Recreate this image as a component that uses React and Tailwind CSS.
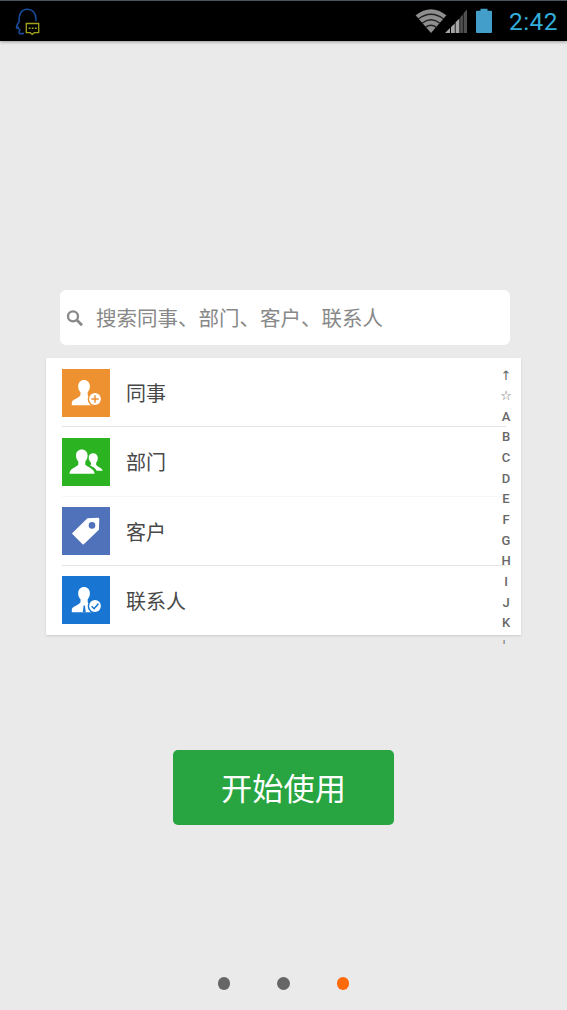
import React from 'react';

const LETTERS = ['↑', '☆', 'A', 'B', 'C', 'D', 'E', 'F', 'G', 'H', 'I', 'J', 'K', 'ı'];

const person = 'M22 11C25.3 11 27.9 13.5 27.9 17.2C27.9 20 26.9 21.8 25.7 23.2V26.3C27 28.3 34 28.8 34.6 33.5V36.2H9.8V33.5C10.5 30 17 29.2 18.5 26.3V23.2C17 21.7 16.2 20 16.2 17.2C16.2 13.5 18.7 11 22 11Z';

function ColleagueIcon() {
  return (
    <svg viewBox="0 0 48 48" className="size-12 bg-[#ee9131]">
      <path d={person} fill="#fff" />
      <circle cx="33" cy="30" r="7.3" fill="#ee9131" />
      <circle cx="33" cy="30" r="5.9" fill="#fff" />
      <path d="M33 26.3v7.4M29.3 30h7.4" stroke="#ee9131" strokeWidth="1.5" />
    </svg>
  );
}

function DepartmentIcon() {
  return (
    <svg viewBox="0 0 48 48" className="size-12 bg-[#2bb321]">
      <path d="M31 15.2C33.8 15.2 35.8 17.2 35.8 20C35.8 22 35.2 23.5 34.2 24.5V26.8C35.3 29.4 39.8 29.2 40.7 32.8H34.7C33.5 29.8 30.6 28.8 28.2 27.4C29.3 26.4 29.3 25.2 28.8 24.4C27.4 23 26.7 21.7 26.7 19.6C26.7 17 28.5 15.2 31 15.2Z" fill="#fff" />
      <path d="M19.8 11.6C23.2 11.6 25.6 14.1 25.6 17.6C25.6 20.2 24.7 22 23.3 23.5V26.5C25 29.3 32 29.8 32.7 35.8H7.5C7.7 29.8 14.8 29.5 16.3 26.5V23.5C14.8 22 14 20.2 14 17.6C14 14.1 16.4 11.6 19.8 11.6Z" fill="#fff" />
    </svg>
  );
}

function CustomerIcon() {
  return (
    <svg viewBox="0 0 48 48" className="size-12 bg-[#5072bb]">
      <path d="M25.4 11.2L36 10.8Q37.3 10.8 37.3 12.1L36.9 22.7L21.8 37.3Q21.2 37.9 20.6 37.3L10.4 27.1Q9.8 26.5 10.4 25.9Z" fill="#fff" />
      <circle cx="30" cy="18.4" r="3.3" fill="#5072bb" />
    </svg>
  );
}

function ContactIcon() {
  return (
    <svg viewBox="0 0 48 48" className="size-12 bg-[#1876d2]">
      <path d={person} fill="#fff" />
      <path d="M21.6 29.5h1.3l.8 6.7h-2.9z" fill="#1876d2" />
      <circle cx="33" cy="30" r="7.3" fill="#1876d2" />
      <circle cx="33" cy="30" r="5.9" fill="#fff" />
      <path d="M29.7 30.3l2.4 2.4 4.3-4.9" fill="none" stroke="#1876d2" strokeWidth="1.6" />
    </svg>
  );
}

const ROWS = [
  { label: '同事', Icon: ColleagueIcon, line: 'border-[#e4e4e4]' },
  { label: '部门', Icon: DepartmentIcon, line: 'border-[#f7f7f7]' },
  { label: '客户', Icon: CustomerIcon, line: 'border-[#e4e4e4]' },
  { label: '联系人', Icon: ContactIcon, line: 'border-transparent' },
];

function StatusBar() {
  return (
    <header className="flex h-[41px] items-center border-t border-[#4b555b] bg-black pl-[15px] pr-[9px] shadow-[0_1px_3px_rgba(0,0,0,0.35)]">
      <svg viewBox="0 0 26 30" className="h-[30px] w-[26px]" fill="none">
        <path d="M9 27.3C7.4 27.8 5.3 28 4.3 27.1C3.5 26.3 4 25 5 24.1C3.9 23.2 3.6 22.4 3.1 21.4C2.4 22.4 1.4 22.9 1.5 21.1C1.6 18.9 3.5 16.9 4.2 15.6C3.6 7.8 6.6 3.2 12.2 3.2C17.8 3.2 20.8 7.2 21 13.5V15.2" stroke="#184c9c" strokeWidth="1.5" />
        <path d="M11.3 17.5H23.7V26.7H19.4L17.2 28.5L15.2 26.7H11.3Z" stroke="#a3a51c" strokeWidth="1.3" />
        <path d="M13.7 22.2h1.8M16.8 22.2h1.8M19.9 22.2h1.8" stroke="#a3a51c" strokeWidth="1.6" />
      </svg>
      <div className="ml-auto flex items-center">
        <svg viewBox="0 0 32 26" className="h-[26px] w-8" fill="none">
          <path d="M.6 7.2Q16-4.8 31.4 7.2L16 25Z" fill="#8e8e8e" />
          <path d="M3.3 11Q16 1.4 28.7 11M7 15.3Q16 8.3 25 15.3M10.5 19.4Q16 15 21.5 19.4" stroke="#222" strokeWidth="1.4" />
        </svg>
        <svg viewBox="0 0 23 26" className="-ml-[2px] h-[26px] w-[23px]">
          <path d="M0 25L5 20V25ZM6 19L9.8 15.5V25H6ZM10.6 14.2L14.4 10.6V25H10.6Z" fill="#a5a5a5" />
          <path d="M15.2 9.3L17.9 6.6V25H15.2ZM18.6 5.3L22 1.6V25H18.6Z" fill="#515151" />
        </svg>
        <svg viewBox="0 0 16 26" className="ml-[8px] h-[26px] w-4">
          <path d="M4.5 .8H11.5V2.8H15Q16 2.8 16 3.8V24Q16 25 15 25H1Q0 25 0 24V3.8Q0 2.8 1 2.8H4.5Z" fill="#439fc9" />
        </svg>
        <span className="ml-[17px] w-[49px] whitespace-nowrap pt-0.5 font-['Roboto',sans-serif] text-[24.5px] font-normal leading-[30px] tracking-[0.4px] text-[#33aedb]">2:42</span>
      </div>
    </header>
  );
}

export default function App() {
  return (
    <div className="flex h-[1010px] w-[567px] flex-col overflow-hidden bg-[#eaeaea] font-['Noto_Sans_CJK_SC',sans-serif]">
      <StatusBar />
      <main className="flex flex-1 flex-col">
        <div className="ml-[60px] mt-[249px] flex h-[55px] w-[450px] items-center rounded-[6px] bg-white pl-[6px]">
          <svg viewBox="0 0 18 18" className="size-[18px]" fill="none" stroke="#888" strokeWidth="2.3">
            <circle cx="7" cy="7.3" r="5" />
            <path d="M10.8 11.1L16 16.2" strokeWidth="2.8" />
          </svg>
          <span className="ml-3 whitespace-nowrap pb-px text-[20.5px] leading-[30px] text-[#888]">搜索同事、部门、客户、联系人</span>
        </div>

        <section className="relative ml-[46px] mt-[13px] h-[276.5px] w-[475px] bg-white shadow-[0_1px_2px_rgba(0,0,0,0.13)]">
          {ROWS.map(({ label, Icon, line }) => (
            <div key={label} className={`ml-4 flex h-[69.25px] w-[444px] items-center border-b pt-px ${line}`}>
              <Icon />
              <span className="ml-4 pt-px text-[20px] leading-[30px] text-[#484848]">{label}</span>
            </div>
          ))}
          <nav className="absolute right-[5px] top-[7.5px] flex w-5 flex-col">
            {LETTERS.map((letter) => (
              <span key={letter} className="h-[20.65px] shrink-0 text-center font-['Roboto','DejaVu_Sans',sans-serif] text-[13px] font-medium leading-[20.65px] text-[#686868] last:-mt-0.5 last:pr-1 last:text-[8px]">{letter}</span>
            ))}
          </nav>
        </section>

        <button className="mt-[115.5px] h-[74.5px] w-[221px] self-center rounded-[5px] bg-[#28a440] text-[31.2px] leading-[46px] text-white">开始使用</button>

        <div className="mb-[20.5px] mt-auto flex justify-center gap-[47px]">
          <i className="size-[12.5px] rounded-full bg-[#666]" />
          <i className="size-[12.5px] rounded-full bg-[#666]" />
          <i className="size-[12.5px] rounded-full bg-[#ff6a09]" />
        </div>
      </main>
    </div>
  );
}
